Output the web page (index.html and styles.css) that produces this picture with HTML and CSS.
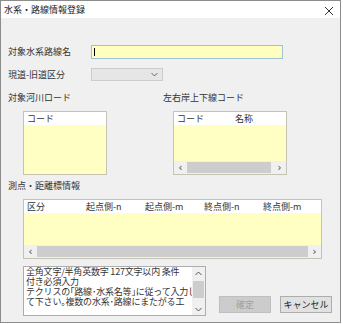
FILE: index.html
```html
<!DOCTYPE html>
<html lang="ja">
<head>
    <meta charset="UTF-8">
    <title>水系・路線情報登録</title>
    <link rel="stylesheet" href="styles.css">
</head>
<body>
    <div class="window">
        <div class="titlebar">
            <span class="title">水系・路線情報登録</span>
            <svg class="close" width="10" height="10" viewBox="0 0 10 10">
                <path d="M1 1 L9 9 M9 1 L1 9" stroke="#333" stroke-width="1" fill="none"/>
            </svg>
        </div>

        <div class="content">
            <div class="row">
                <label class="row-label">対象水系路線名</label>
                <div class="text-input"><span class="caret"></span></div>
            </div>

            <div class="row row-select">
                <label class="row-label">現道-旧道区分</label>
                <div class="select">
                    <svg width="7" height="5" viewBox="0 0 7 5">
                        <path d="M0.5 1 L3.5 4 L6.5 1" stroke="#666" stroke-width="1" fill="none"/>
                    </svg>
                </div>
            </div>

            <div class="two-col">
                <div class="col col-left">
                    <div class="section-label">対象河川ロード</div>
                    <div class="listbox list-river">
                        <div class="list-head">
                            <span class="cell">コード</span>
                        </div>
                        <div class="list-body"></div>
                    </div>
                </div>
                <div class="col col-right">
                    <div class="section-label">左右岸上下線コード</div>
                    <div class="listbox list-bank">
                        <div class="list-head">
                            <span class="cell cell-code">コード</span>
                            <span class="cell">名称</span>
                        </div>
                        <div class="list-body"></div>
                        <div class="hscroll">
                            <span class="arrow">&lsaquo;</span>
                            <span class="thumb thumb-bank"></span>
                            <span class="arrow">&rsaquo;</span>
                        </div>
                    </div>
                </div>
            </div>

            <div class="section-label section-points">測点・距離標情報</div>
            <div class="listbox list-points">
                <div class="list-head">
                    <span class="cell col-w">区分</span>
                    <span class="cell col-w">起点側-n</span>
                    <span class="cell col-w">起点側-m</span>
                    <span class="cell col-w">終点側-n</span>
                    <span class="cell col-w">終点側-m</span>
                </div>
                <div class="list-body"></div>
                <div class="hscroll">
                    <span class="arrow">&lsaquo;</span>
                    <span class="thumb thumb-points"></span>
                    <span class="arrow">&rsaquo;</span>
                </div>
            </div>

            <div class="bottom">
                <div class="memo">
                    <div class="memo-text">
                        <div>全角文字/半角英数字&nbsp;127文字以内&nbsp;条件</div>
                        <div>付き必須入力</div>
                        <div>テクリスの｢路線･水系名等｣に従って入力し</div>
                        <div>て下さい｡複数の水系･路線にまたがる工</div>
                    </div>
                    <div class="vscroll">
                        <svg width="7" height="5" viewBox="0 0 7 5">
                            <path d="M0.5 4 L3.5 1 L6.5 4" stroke="#555" stroke-width="1" fill="none"/>
                        </svg>
                        <span class="vthumb"></span>
                        <span class="vspace"></span>
                        <svg width="7" height="5" viewBox="0 0 7 5">
                            <path d="M0.5 1 L3.5 4 L6.5 1" stroke="#555" stroke-width="1" fill="none"/>
                        </svg>
                    </div>
                </div>
                <div class="buttons">
                    <button class="btn" disabled>確定</button>
                    <button class="btn">キャンセル</button>
                </div>
            </div>
        </div>
    </div>
</body>
</html>
```

FILE: styles.css
```css
body {
    margin: 0;
    background: #ffffff;
    font-family: "Noto Sans CJK JP", "Noto Sans", sans-serif;
    font-size: 9px;
    color: #333333;
}
.window {
    width: 339px;
    height: 321px;
    border: 1px solid #8c8c8c;
    background: #f0f0f0;
    display: flex;
    flex-direction: column;
}
.titlebar {
    height: 17px;
    background: #ffffff;
    display: flex;
    align-items: center;
    justify-content: space-between;
    padding: 0 6px 0 3px;
}
.title {
    font-size: 9px;
    line-height: 10px;
    color: #222;
}
.close {
    margin-top: 2px;
}
.content {
    padding: 27px 0 0 7px;
}
.row {
    display: flex;
    align-items: center;
    height: 14px;
}
.row-label {
    width: 83px;
    line-height: 10px;
}
.text-input {
    width: 190px;
    height: 12px;
    background: #ffffc0;
    border: 1px solid #9fc2d8;
    display: flex;
    align-items: center;
}
.caret {
    width: 1px;
    height: 8px;
    background: #000;
    margin-left: 2px;
}
.row-select {
    margin-top: 9px;
    height: 13px;
}
.select {
    width: 66px;
    height: 11px;
    background: #e6e6e6;
    border: 1px solid #cccccc;
    display: flex;
    align-items: center;
    justify-content: flex-end;
    padding-right: 4px;
}
.two-col {
    display: flex;
    margin-top: 12px;
}
.col-left {
    width: 155px;
}
.section-label {
    line-height: 10px;
    height: 10px;
}
.listbox {
    border: 1px solid #c4c4b4;
    background: #ffffc4;
    display: flex;
    flex-direction: column;
    overflow: hidden;
}
.list-river {
    width: 82px;
    height: 62px;
    margin: 8px 0 0 15px;
}
.list-bank {
    width: 112px;
    height: 62px;
    margin: 8px 0 0 10px;
}
.list-head {
    height: 13px;
    background: #ffffff;
    display: flex;
    align-items: center;
    flex-shrink: 0;
}
.cell {
    padding-left: 3px;
    line-height: 10px;
    white-space: nowrap;
}
.cell-code {
    width: 55px;
}
.list-body {
    flex: 1;
}
.hscroll {
    height: 13px;
    background: #f0f0f0;
    display: flex;
    align-items: center;
    flex-shrink: 0;
}
.arrow {
    width: 13px;
    text-align: center;
    font-size: 11px;
    line-height: 13px;
    color: #505050;
    font-family: "DejaVu Sans", sans-serif;
}
.thumb {
    height: 11px;
    background: #cdcdcd;
}
.thumb-bank {
    width: 84px;
    margin-right: auto;
}
.thumb-points {
    flex: 1;
}
.section-points {
    margin-top: 6px;
}
.list-points {
    width: 297px;
    height: 58px;
    margin: 8px 0 0 15px;
}
.col-w {
    width: 56px;
    flex-shrink: 0;
}
.bottom {
    display: flex;
    align-items: flex-end;
    margin: 7px 0 0 15px;
}
.memo {
    width: 181px;
    height: 48px;
    border: 1px solid #adadad;
    background: #ffffff;
    display: flex;
}
.memo-text {
    flex: 1;
    overflow: hidden;
    padding: 0 0 0 2px;
    line-height: 10px;
    letter-spacing: -0.2px;
    white-space: nowrap;
}
.vscroll {
    width: 13px;
    background: #f0f0f0;
    display: flex;
    flex-direction: column;
    align-items: center;
    padding: 4px 0 3px;
    box-sizing: border-box;
}
.vthumb {
    width: 11px;
    height: 17px;
    margin-top: 5px;
    background: #cdcdcd;
}
.vspace {
    flex: 1;
}
.buttons {
    display: flex;
    gap: 9px;
    margin: 0 0 3px 13px;
}
.btn {
    width: 52px;
    height: 17px;
    padding: 0;
    font-family: inherit;
    font-size: 9px;
    background: #e1e1e1;
    border: 1px solid #adadad;
    color: #222;
}
.btn:disabled {
    background: #cccccc;
    border-color: #bfbfbf;
    color: #a0a0a0;
}
```
